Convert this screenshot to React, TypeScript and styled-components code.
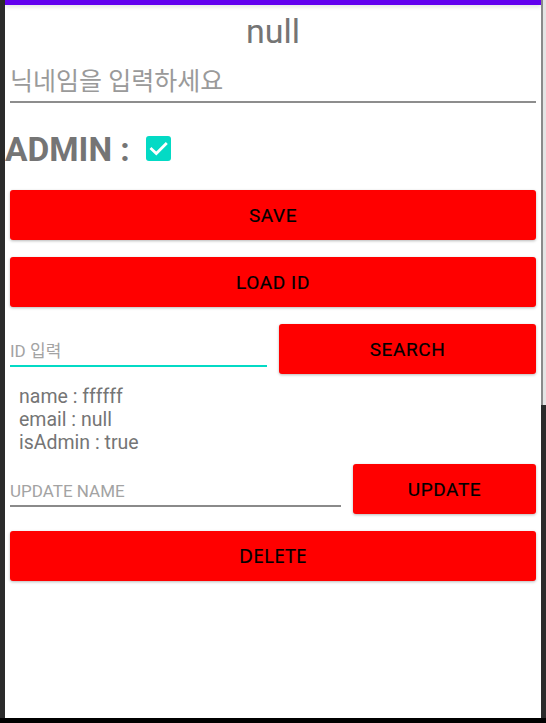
import * as React from 'react';
import styled, { createGlobalStyle } from 'styled-components';

const GlobalStyle = createGlobalStyle`
    html, body {
        margin: 0;
        padding: 0;
        background: #000;
    }
    * {
        box-sizing: border-box;
    }
`;

const TEAL = '#03dac5';

export default function App() {
    return (
        <>
            <GlobalStyle/>
            <StyledFrame>
                <StyledDevice>
                    <StyledLeftStrip/>
                    <StyledScreen>
                        <StyledStatusBar/>
                        <StyledTitle>null</StyledTitle>
                        <StyledNickInput placeholder="닉네임을 입력하세요"/>
                        <StyledAdminRow>
                            <StyledAdminLabel>ADMIN :</StyledAdminLabel>
                            <StyledCheckbox>
                                <svg width="25" height="25" viewBox="0 0 25 25">
                                    <path d="M5.5 13 L10.3 17.6 L19.8 8" fill="none" stroke="#fff" strokeWidth="2.8" strokeLinecap="square"/>
                                </svg>
                            </StyledCheckbox>
                        </StyledAdminRow>
                        <StyledButton $top={20}>SAVE</StyledButton>
                        <StyledButton $top={17}>LOAD ID</StyledButton>
                        <StyledRow $top={17}>
                            <StyledLineInput placeholder="ID 입력" $focused/>
                            <StyledRowButton>SEARCH</StyledRowButton>
                        </StyledRow>
                        <StyledInfo>
                            <div>name : ffffff</div>
                            <div>email : null</div>
                            <div>isAdmin : true</div>
                        </StyledInfo>
                        <StyledRow $top={10}>
                            <StyledLineInput placeholder="UPDATE NAME"/>
                            <StyledRowButton $width={183}>UPDATE</StyledRowButton>
                        </StyledRow>
                        <StyledButton $top={17} $alt>DELETE</StyledButton>
                    </StyledScreen>
                    <StyledRightStrip>
                        <StyledRightTop/>
                    </StyledRightStrip>
                </StyledDevice>
                <StyledBottomBar/>
            </StyledFrame>
        </>
    );
}

const StyledFrame = styled.div`
    width: 546px;
    height: 723px;
    display: flex;
    flex-direction: column;
    background: #000;
    overflow: hidden;
`;

const StyledDevice = styled.div`
    display: flex;
    height: 718px;
`;

const StyledLeftStrip = styled.div`
    width: 5px;
    background: #2b2b2b;
`;

const StyledRightStrip = styled.div`
    width: 5px;
    background: #2b2b2b;
`;

const StyledRightTop = styled.div`
    height: 405px;
    background: #e4e4e4;
    border-left: 2px solid #8a8a8a;
`;

const StyledBottomBar = styled.div`
    height: 5px;
    background: #000;
`;

const StyledScreen = styled.div`
    width: 536px;
    background: #fff;
    display: flex;
    flex-direction: column;
    font-family: Roboto, "Noto Sans CJK KR", sans-serif;
`;

const StyledStatusBar = styled.div`
    height: 5px;
    background: #6200ee;
    box-shadow: 0 2px 4px rgba(0, 0, 0, 0.12);
`;

const StyledTitle = styled.div`
    margin-top: 8px;
    height: 36px;
    line-height: 36px;
    font-size: 34px;
    color: #757575;
    text-align: center;
`;

const StyledNickInput = styled.input`
    margin: 11px 5px 0;
    height: 43px;
    padding: 2px 0 0;
    border: none;
    border-bottom: 2px solid #8d8d8d;
    outline: none;
    background: transparent;
    font-family: Roboto, "Noto Sans CJK KR", sans-serif;
    font-size: 25px;
    color: #333;
    &::placeholder {
        color: #9a9a9a;
    }
`;

const StyledAdminRow = styled.div`
    margin-top: 27px;
    height: 40px;
    display: flex;
    align-items: center;
    gap: 16px;
`;

const StyledAdminLabel = styled.div`
    font-size: 33.5px;
    line-height: 40px;
    font-weight: 700;
    color: #757575;
`;

const StyledCheckbox = styled.div`
    width: 25px;
    height: 25px;
    margin-top: -3px;
    border-radius: 3px;
    background: ${TEAL};
    display: flex;
`;

const StyledButton = styled.button<{ $top: number; $alt?: boolean }>`
    margin: ${p => p.$top}px 5px 0;
    height: 50px;
    border: none;
    border-radius: 3px;
    background: #ff0000;
    box-shadow: 0 1px 3px rgba(0, 0, 0, 0.28);
    color: #000;
    font-family: ${p => p.$alt ? '"Noto Sans"' : 'Roboto'}, sans-serif;
    font-size: 19px;
    font-weight: 400;
    letter-spacing: ${p => p.$alt ? 0.3 : 0.6}px;
    -webkit-text-stroke: 0.2px #000;
    padding: 0;
`;

const StyledRow = styled.div<{ $top: number }>`
    margin-top: ${p => p.$top}px;
    padding: 0 5px;
    display: flex;
    align-items: flex-start;
    gap: 12px;
`;

const StyledLineInput = styled.input<{ $focused?: boolean }>`
    flex: 1;
    min-width: 0;
    margin-top: 12px;
    height: 31px;
    padding: 0;
    border: none;
    border-bottom: 2px solid ${p => p.$focused ? TEAL : '#8a8a8a'};
    outline: none;
    background: transparent;
    font-family: Roboto, "Noto Sans CJK KR", sans-serif;
    font-size: 17px;
    color: #333;
    &::placeholder {
        color: #a3a3a3;
    }
`;

const StyledRowButton = styled.button<{ $width?: number }>`
    ${p => p.$width ? `width: ${p.$width}px;` : 'flex: 1;'}
    height: 50px;
    border: none;
    border-radius: 3px;
    background: #ff0000;
    box-shadow: 0 1px 3px rgba(0, 0, 0, 0.28);
    color: #000;
    font-family: Roboto, sans-serif;
    font-size: 19px;
    font-weight: 400;
    letter-spacing: 0.6px;
    -webkit-text-stroke: 0.2px #000;
    padding: 0;
`;

const StyledInfo = styled.div`
    margin-top: 11px;
    padding-left: 14px;
    font-size: 19.5px;
    line-height: 23px;
    color: #757575;
`;
